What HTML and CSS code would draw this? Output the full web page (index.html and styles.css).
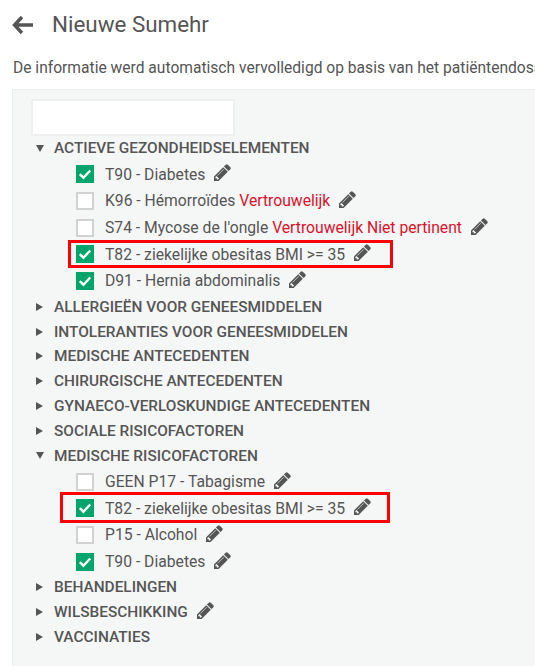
FILE: index.html
```html
<!DOCTYPE html>
<html lang="en">
<head>
    <meta charset="UTF-8">
    <title>Nieuwe Sumehr</title>
    <link rel="stylesheet" href="styles.css">
</head>
<body>
    <svg class="defs" width="0" height="0">
        <symbol id="pencil" viewBox="0 0 1536 1536">
            <path d="M363 1408l91-91-235-235-91 91v107h128v128h107zm523-928q0-22-22-22-10 0-17 7l-542 542q-7 7-7 17 0 22 22 22 10 0 17-7l542-542q7-7 7-17zm-54-192l416 416-832 832h-416v-416zm683 96q0 53-37 90l-166 166-416-416 166-165q36-38 90-38 53 0 91 38l235 234q37 39 37 91z"/>
        </symbol>
        <symbol id="check" viewBox="0 0 18 18">
            <path d="M3.8 9.2l3.6 3.5 6.8-7.2" fill="none" stroke="#fff" stroke-width="2.4"/>
        </symbol>
    </svg>

    <div class="header">
        <svg class="back" viewBox="0 0 22 20"><path d="M10 2L2.500 10l7.500 8M3 10h18" fill="none" stroke="#555" stroke-width="3.400"/></svg>
        <h1 class="title">Nieuwe Sumehr</h1>
    </div>
    <p class="intro">De informatie werd automatisch vervolledigd op basis van het patiëntendossier</p>

    <div class="panel">
        <div class="searchbox"></div>

        <div class="group"><span class="arrow down"></span>ACTIEVE GEZONDHEIDSELEMENTEN</div>
        <div class="item"><span class="box on"><svg><use href="#check"/></svg></span>T90 - Diabetes<svg class="edit"><use href="#pencil"/></svg></div>
        <div class="item"><span class="box"></span>K96 - Hémorroïdes&nbsp;<span class="red">Vertrouwelijk</span><svg class="edit"><use href="#pencil"/></svg></div>
        <div class="item"><span class="box"></span>S74 - Mycose de l'ongle&nbsp;<span class="red">Vertrouwelijk Niet pertinent</span><svg class="edit"><use href="#pencil"/></svg></div>
        <div class="item"><span class="box on"><svg><use href="#check"/></svg></span>T82 - ziekelijke obesitas BMI &gt;= 35<svg class="edit"><use href="#pencil"/></svg></div>
        <div class="item"><span class="box on"><svg><use href="#check"/></svg></span>D91 - Hernia abdominalis<svg class="edit"><use href="#pencil"/></svg></div>

        <div class="group"><span class="arrow"></span>ALLERGIEËN VOOR GENEESMIDDELEN</div>
        <div class="group"><span class="arrow"></span>INTOLERANTIES VOOR GENEESMIDDELEN</div>
        <div class="group"><span class="arrow"></span>MEDISCHE ANTECEDENTEN</div>
        <div class="group"><span class="arrow"></span>CHIRURGISCHE ANTECEDENTEN</div>
        <div class="group"><span class="arrow"></span>GYNAECO-VERLOSKUNDIGE ANTECEDENTEN</div>
        <div class="group"><span class="arrow"></span>SOCIALE RISICOFACTOREN</div>
        <div class="group"><span class="arrow down"></span>MEDISCHE RISICOFACTOREN</div>
        <div class="item"><span class="box"></span>GEEN P17 - Tabagisme<svg class="edit"><use href="#pencil"/></svg></div>
        <div class="item"><span class="box on"><svg><use href="#check"/></svg></span>T82 - ziekelijke obesitas BMI &gt;= 35<svg class="edit"><use href="#pencil"/></svg></div>
        <div class="item"><span class="box"></span>P15 - Alcohol<svg class="edit"><use href="#pencil"/></svg></div>
        <div class="item"><span class="box on"><svg><use href="#check"/></svg></span>T90 - Diabetes<svg class="edit"><use href="#pencil"/></svg></div>

        <div class="group"><span class="arrow"></span>BEHANDELINGEN</div>
        <div class="group"><span class="arrow"></span>WILSBESCHIKKING<svg class="edit"><use href="#pencil"/></svg></div>
        <div class="group"><span class="arrow"></span>VACCINATIES</div>
    </div>

    <div class="mark mark-one"></div>
    <div class="mark mark-two"></div>
</body>
</html>
```

FILE: styles.css
```css
html, body
{
    height: 100%;
    overflow: hidden;
}
body
{
    margin: 0;
    position: relative;
    background-color: #fff;
    color: #555;
    font-family: Roboto, sans-serif;
    font-size: 15.7px;
}
.defs
{
    position: absolute;
}
.header
{
    display: flex;
    align-items: center;
    height: 48px;
    padding-left: 12px;
}
.back
{
    width: 22px;
    height: 20px;
    margin-top: 2px;
}
.title
{
    margin: 0 0 0 18px;
    font-size: 22.4px;
    font-weight: 400;
    white-space: nowrap;
}
.intro
{
    margin: 10px 0 0 13px;
    height: 31px;
    font-size: 15.6px;
    line-height: 20px;
    white-space: nowrap;
    overflow: hidden;
}
.panel
{
    margin-left: 12px;
    height: 580px;
    padding: 9px 0 0 18px;
    box-sizing: border-box;
    background-color: #f5f7f7;
    border-top: 1px solid #eceeee;
    border-left: 1px solid #eceeee;
}
.searchbox
{
    width: 204px;
    height: 37px;
    box-sizing: border-box;
    background-color: #fff;
    border: 2px solid #eef0f0;
}
.group
{
    display: flex;
    align-items: center;
    height: 24.850px;
    padding-left: 5px;
    font-weight: 500;
    font-size: 15.4px;
    white-space: nowrap;
}
.arrow
{
    width: 0;
    height: 0;
    margin-right: 11px;
    border-style: solid;
    border-width: 4px 0 4px 7px;
    border-color: transparent transparent transparent #555;
}
.arrow.down
{
    margin-right: 10px;
    border-width: 7px 4px 0 4px;
    border-color: #555 transparent transparent transparent;
}
.item
{
    display: flex;
    align-items: center;
    height: 26.700px;
    padding-left: 45px;
    white-space: nowrap;
}
.box
{
    width: 18px;
    height: 18px;
    box-sizing: border-box;
    margin-right: 11px;
    flex-shrink: 0;
    background-color: #fff;
    border: 2px solid #d2d2d2;
}
.box.on
{
    background-color: #00a56c;
    border: 0;
}
.box svg
{
    display: block;
    width: 18px;
    height: 18px;
}
.edit
{
    width: 17px;
    height: 17px;
    margin-left: 9px;
    margin-top: -3px;
    fill: #555;
}
.red
{
    color: #d9112c;
}
.mark
{
    position: absolute;
    box-sizing: border-box;
    border: 3px solid #f00;
}
.mark-one
{
    left: 68px;
    top: 240px;
    width: 325px;
    height: 28px;
}
.mark-two
{
    left: 60px;
    top: 492px;
    width: 330px;
    height: 31px;
}
```
